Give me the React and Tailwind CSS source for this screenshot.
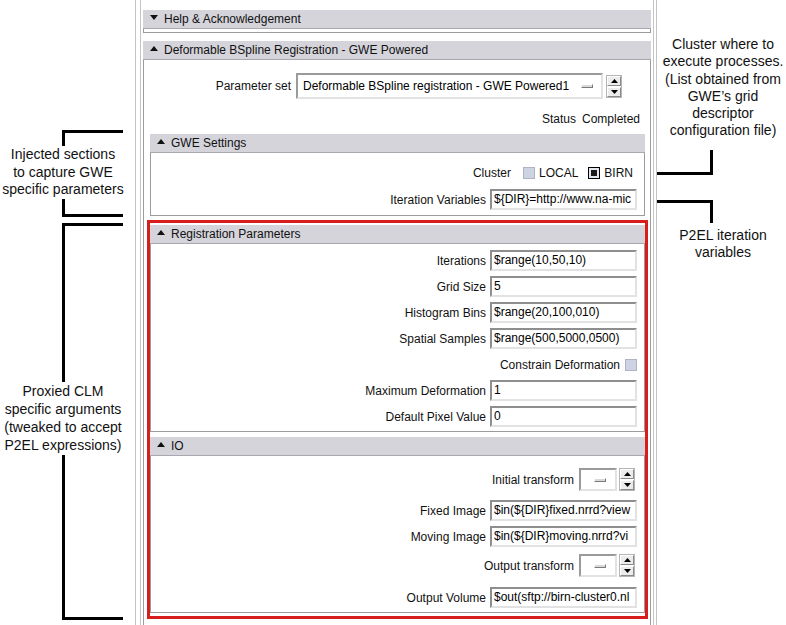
import React from "react";

const Tri = ({ up }) => (
  <svg width="8" height="5" viewBox="0 0 8 5" className="mb-[4px] shrink-0">
    {up ? <path d="M0 5 L4 0 L8 5 Z" fill="#111" /> : <path d="M0 0 L8 0 L4 5 Z" fill="#111" />}
  </svg>
);

function Header({ open = true, title }) {
  return (
    <div className="h-[19px] flex items-center gap-[6px] pl-[7px] bg-[#d5d4db] border-b border-[#a9a8ae] text-[12px] text-[#111]">
      <Tri up={open} />
      <span className="leading-none">{title}</span>
    </div>
  );
}

function Dash() {
  return <div className="w-[12px] h-[4px] bg-[#d9d9d9] border border-t-white border-l-white border-b-[#7a7a7a] border-r-[#7a7a7a]" />;
}

function SpinBtn({ up }) {
  return (
    <div className="h-[10px] w-[14px] flex items-center justify-center bg-[#ececec] border border-t-white border-l-white border-b-[#8a8a8a] border-r-[#8a8a8a]">
      <svg width="7" height="4" viewBox="0 0 7 4">
        {up ? <path d="M0 4 L3.5 0 L7 4 Z" fill="#000" /> : <path d="M0 0 L7 0 L3.5 4 Z" fill="#000" />}
      </svg>
    </div>
  );
}

function Spinner() {
  return (
    <div className="flex flex-col gap-[1px] border border-[#b5b5b5] bg-white">
      <SpinBtn up />
      <SpinBtn />
    </div>
  );
}

function Field({ label, value }) {
  return (
    <div className="flex justify-end items-center gap-[4px] pr-[7px] h-[21px]">
      <span className="text-[12px] text-[#111] whitespace-nowrap">{label}</span>
      <div className="w-[147px] h-[21px] shrink-0 bg-white border-2 border-t-[#8e8e8e] border-l-[#8e8e8e] border-r-[#e2e2e2] border-b-[#e2e2e2] text-[12px] leading-[17px] pl-[2px] whitespace-nowrap text-black">
        {value}
      </div>
    </div>
  );
}

function SmallSelect({ label }) {
  return (
    <div className="flex justify-end items-center pr-[9px] h-[23px]">
      <span className="text-[12px] text-[#111] mr-[5px]">{label}</span>
      <div className="w-[38px] h-[23px] bg-white border-2 border-t-[#9a9a9a] border-l-[#9a9a9a] border-r-[#e2e2e2] border-b-[#e2e2e2] flex items-center justify-end pr-[9px]">
        <Dash />
      </div>
      <div className="ml-[2px]">
        <Spinner />
      </div>
    </div>
  );
}

function Box({ checked }) {
  if (checked) {
    return (
      <div className="w-[12px] h-[12px] border-[1.5px] border-black bg-[#e4e6ee] flex items-center justify-center">
        <div className="w-[6px] h-[6px] bg-[#1a1a1a]" />
      </div>
    );
  }
  return <div className="w-[12px] h-[12px] border border-[#aeb4c2] bg-[#cdd3e3]" />;
}

function LeftNotes() {
  return (
    <div className="w-[135px] shrink-0 flex flex-col text-[14px] leading-[17.5px] text-[#111]">
      <div className="mt-[130px] ml-[62px] w-[61px] h-[16px] border-t-[3px] border-l-[3px] border-black" />
      <div className="w-[126px] text-center">
        <div>Injected sections</div>
        <div>to capture GWE</div>
        <div>specific parameters</div>
      </div>
      <div className="ml-[62px] w-[61px] h-[18px] border-b-[3px] border-l-[3px] border-black" />

      <div className="mt-[6px] ml-[62px] w-[61px] h-[159px] border-t-[3px] border-l-[3px] border-black" />
      <div className="w-[126px] text-center leading-[18.3px]">
        <div>Proxied CLM</div>
        <div>specific arguments</div>
        <div>(tweaked to accept</div>
        <div>P2EL expressions)</div>
      </div>
      <div className="ml-[62px] w-[61px] h-[165px] border-b-[3px] border-l-[3px] border-black" />
    </div>
  );
}

function RightNotes() {
  return (
    <div className="flex-1 flex flex-col text-[14px] text-[#111]">
      <div className="mt-[36px] text-center leading-[17.3px] w-[132px]">
        <div>Cluster where to</div>
        <div>execute processes.</div>
        <div>(List obtained from</div>
        <div>GWE’s grid</div>
        <div>descriptor</div>
        <div>configuration file)</div>
      </div>
      <div className="mt-[10px] w-[56px] h-[25px] border-r-[3px] border-b-[3px] border-black" />
      <div className="mt-[25px] w-[56px] h-[23px] border-r-[3px] border-t-[3px] border-black" />
      <div className="mt-[4px] text-center leading-[17px] w-[132px]">
        <div>P2EL iteration</div>
        <div>variables</div>
      </div>
    </div>
  );
}

function Panel() {
  return (
    <div className="w-[522px] shrink-0 h-full border-x border-[#c4c4c4] pl-[4px] pr-[2px]">
      <div className="h-full border-x border-[#c4c4c4] px-[2px] flex flex-col pt-[10px]">
        <Header open={false} title={"Help & Acknowledgement"} />
        <div className="h-[4px] border-x border-b border-[#9c9c9c]" />

        <div className="mt-[8px]">
          <Header title="Deformable BSpline Registration - GWE Powered" />
        </div>
        <div className="flex-1 border-x border-[#9c9c9c] pt-[13px] overflow-hidden">
          <div className="flex justify-end items-center pr-[28px]">
            <span className="text-[12px] text-[#111] mr-[5px]">Parameter set</span>
            <div className="w-[307px] h-[26px] bg-white border-2 border-t-[#9a9a9a] border-l-[#9a9a9a] border-r-[#e2e2e2] border-b-[#e2e2e2] flex items-center pl-[5px] pr-[6px] gap-[12px]">
              <span className="text-[12px] text-black whitespace-nowrap">Deformable BSpline registration - GWE Powered1</span>
              <Dash />
            </div>
            <div className="ml-[3px]">
              <Spinner />
            </div>
          </div>

          <div className="mt-[13px] flex justify-end gap-[6px] pr-[10px] text-[12px] text-[#111] leading-[14px]">
            <span>Status</span>
            <span>Completed</span>
          </div>

          {/* GWE Settings */}
          <div className="mt-[8px] ml-[6px] mr-[5px]">
            <Header title="GWE Settings" />
            <div className="border-x border-b border-[#9c9c9c] pt-[12px] pb-[5px]">
              <div className="flex justify-end items-center h-[16px] pr-[11px] text-[12px] text-[#111]">
                <span className="mr-[12px]">Cluster</span>
                <Box />
                <span className="ml-[4px] mr-[10px]">LOCAL</span>
                <Box checked />
                <span className="ml-[4px]">BIRN</span>
              </div>
              <div className="mt-[8px]">
                <Field label="Iteration Variables" value={"${DIR}=http://www.na-mic"} />
              </div>
            </div>
          </div>

          {/* proxied CLM arguments */}
          <div className="mt-[4px] ml-[3px] mr-[2px] border-[3px] border-[#d81d1d] pt-[2px] pb-[3px]">
            <Header title="Registration Parameters" />
            <div className="border-x border-b border-[#9c9c9c] pt-[6px] pb-[4px] flex flex-col gap-[5px]">
              <Field label="Iterations" value="$range(10,50,10)" />
              <Field label="Grid Size" value="5" />
              <Field label="Histogram Bins" value="$range(20,100,010)" />
              <Field label="Spatial Samples" value="$range(500,5000,0500)" />
              <div className="flex justify-end items-center h-[21px] pr-[7px] gap-[5px]">
                <span className="text-[12px] text-[#111]">Constrain Deformation</span>
                <Box />
              </div>
              <Field label="Maximum Deformation" value="1" />
              <Field label="Default Pixel Value" value="0" />
            </div>

            <div className="mt-[5px]">
              <Header title="IO" />
            </div>
            <div className="border-x border-b border-[#9c9c9c] pt-[12px] pb-[4px] flex flex-col">
              <SmallSelect label="Initial transform" />
              <div className="mt-[9px]">
                <Field label="Fixed Image" value={"$in(${DIR}fixed.nrrd?view"} />
              </div>
              <div className="mt-[5px]">
                <Field label="Moving Image" value={"$in(${DIR}moving.nrrd?vi"} />
              </div>
              <div className="mt-[7px]">
                <SmallSelect label="Output transform" />
              </div>
              <div className="mt-[10px]">
                <Field label="Output Volume" value={"$out(sftp://birn-cluster0.nl"} />
              </div>
            </div>
          </div>
        </div>
      </div>
    </div>
  );
}

export default function App() {
  return (
    <div className="w-[786px] h-[625px] bg-white overflow-hidden flex font-['Liberation_Sans',Arial,sans-serif] text-black">
      <LeftNotes />
      <Panel />
      <RightNotes />
    </div>
  );
}
